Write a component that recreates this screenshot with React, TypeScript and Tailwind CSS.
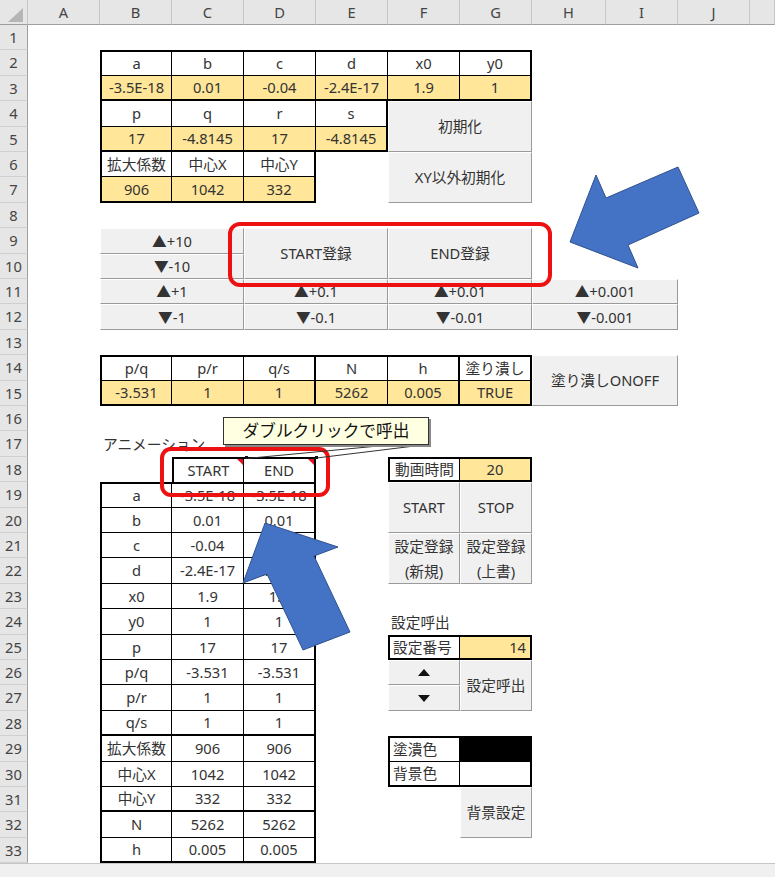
import React from "react";

const CS: Record<string, string> = {
  A: "col-start-2",
  B: "col-start-3",
  C: "col-start-4",
  D: "col-start-5",
  E: "col-start-6",
  F: "col-start-7",
  G: "col-start-8",
  H: "col-start-9",
  I: "col-start-10",
  J: "col-start-11",
  K: "col-start-12",
};
const RS: string[] = [
  "row-start-1", "row-start-2", "row-start-3", "row-start-4", "row-start-5", "row-start-6",
  "row-start-7", "row-start-8", "row-start-9", "row-start-10", "row-start-11", "row-start-12",
  "row-start-13", "row-start-14", "row-start-15", "row-start-16", "row-start-17", "row-start-18",
  "row-start-19", "row-start-20", "row-start-21", "row-start-22", "row-start-23", "row-start-24",
  "row-start-25", "row-start-26", "row-start-27", "row-start-28", "row-start-29", "row-start-30",
  "row-start-31", "row-start-32", "row-start-33", "row-start-34", "row-start-35",
];
const CSPAN: Record<number, string> = { 1: "", 2: "col-span-2", 4: "col-span-4" };
const RSPAN: Record<number, string> = { 1: "", 2: "row-span-2" };
const BT: Record<string, string> = {
  t1: "border-t",
  t2: "border-t-2",
  r1: "border-r",
  r2: "border-r-2",
  b1: "border-b",
  b2: "border-b-2",
  l1: "border-l",
  l2: "border-l-2",
};

function pos(at: string, cs = 1, rs = 1) {
  const col = at[0];
  const row = parseInt(at.slice(1), 10);
  return [CS[col], RS[row], CSPAN[cs], RSPAN[rs]].join(" ");
}

type CellProps = {
  at: string;
  cs?: number;
  rs?: number;
  b?: string;
  bg?: "y" | "w" | "k" | "";
  align?: "c" | "l" | "r";
  children?: React.ReactNode;
  extra?: React.ReactNode;
};

function Cell({ at, cs = 1, rs = 1, b = "", bg = "", align = "c", children, extra }: CellProps) {
  const bc = b
    .split(" ")
    .filter(Boolean)
    .map((t) => BT[t])
    .join(" ");
  const bgc = bg === "y" ? "bg-[#ffe699]" : bg === "w" ? "bg-white" : bg === "k" ? "bg-black" : "";
  const al = align === "l" ? "justify-start pl-[3px]" : align === "r" ? "justify-end pr-[4px]" : "justify-center";
  return (
    <div className={`${pos(at, cs, rs)} ${bc} border-black ${bgc} ${al} relative flex items-center whitespace-nowrap text-[#333]`}>
      {children}
      {extra}
    </div>
  );
}

function Btn({ at, cs = 1, rs = 1, children }: { at: string; cs?: number; rs?: number; children?: React.ReactNode }) {
  return (
    <div
      className={`${pos(at, cs, rs)} flex flex-col items-center justify-center whitespace-nowrap border border-t-white border-l-white border-r-[#9a9a9a] border-b-[#9a9a9a] bg-[#f0f0f0] text-[#333]`}
    >
      {children}
    </div>
  );
}

const COLS = ["A", "B", "C", "D", "E", "F", "G", "H", "I", "J", "K"];
const cols6 = ["B", "C", "D", "E", "F", "G"];
const t1h = ["a", "b", "c", "d", "x0", "y0"];
const t1v = ["-3.5E-18", "0.01", "-0.04", "-2.4E-17", "1.9", "1"];
const t2h = ["p", "q", "r", "s"];
const t2v = ["17", "-4.8145", "17", "-4.8145"];
const t3h = ["拡大係数", "中心X", "中心Y"];
const t3v = ["906", "1042", "332"];
const t4h = ["p/q", "p/r", "q/s", "N", "h", "塗り潰し"];
const t4v = ["-3.531", "1", "1", "5262", "0.005", "TRUE"];
const t4r = ["l2 r1", "r1", "r2", "r1", "r2", "r2"];
const anim: [string, string][] = [
  ["a", "-3.5E-18"],
  ["b", "0.01"],
  ["c", "-0.04"],
  ["d", "-2.4E-17"],
  ["x0", "1.9"],
  ["y0", "1"],
  ["p", "17"],
  ["p/q", "-3.531"],
  ["p/r", "1"],
  ["q/s", "1"],
  ["拡大係数", "906"],
  ["中心X", "1042"],
  ["中心Y", "332"],
  ["N", "5262"],
  ["h", "0.005"],
];

function vb(i: number, n: number) {
  if (i === 0) return "l2 r1";
  if (i === n - 1) return "r2";
  return "r1";
}

const RedCorner = () => (
  <svg className="absolute right-0 top-0" width="6" height="6" viewBox="0 0 6 6">
    <polygon points="0,0 6,0 6,6" fill="#e81123" />
  </svg>
);

export default function App() {
  const rows = Array.from({ length: 33 }, (_, i) => i + 1);
  return (
    <div className="relative h-[877px] w-[775px] overflow-hidden bg-white font-['Noto_Sans','Noto_Sans_CJK_JP',sans-serif] text-[14.7px]">
      <div className="grid h-full w-full grid-cols-[28px_72px_72px_72px_72px_72px_72px_72px_74px_72px_72px_1fr] grid-rows-[25px_25px_26px_25px_26px_25px_25px_26px_25px_26px_25px_25px_26px_25px_26px_25px_25px_26px_25px_26px_25px_25px_26px_25px_26px_25px_25px_26px_25px_26px_25px_25px_26px_25px_14px]">
        {/* corner */}
        <div className="col-start-1 row-start-1 relative border-b border-r border-b-[#9e9e9e] border-r-[#c6c6c6] bg-[#e6e6e6]">
          <svg className="absolute left-0 top-0" width="28" height="25" viewBox="0 0 28 25">
            <polygon points="8,22 23,8 23,22" fill="#b5b5b5" />
          </svg>
        </div>
        {/* column headers */}
        {COLS.map((c) => (
          <div
            key={c}
            className={`${CS[c]} row-start-1 flex items-center justify-center border-b border-r border-b-[#9e9e9e] border-r-[#c6c6c6] bg-[#e6e6e6] text-[#444]`}
          >
            {c === "K" ? "" : c}
          </div>
        ))}
        {/* row headers */}
        {rows.map((n) => (
          <div
            key={n}
            className={`col-start-1 ${RS[n]} flex items-center justify-center border-b border-r border-b-[#d0d0d0] border-r-[#9e9e9e] bg-[#e6e6e6] text-[#444]`}
          >
            {n}
          </div>
        ))}
        <div className="col-start-1 col-span-12 row-start-35 border-t border-[#c6c6c6] bg-[#f0f0f0]" />

        {/* table 1 */}
        {cols6.map((c, i) => (
          <Cell key={"h2" + c} at={c + "2"} bg="w" b={`t2 b1 ${vb(i, 6)}`}>
            {t1h[i]}
          </Cell>
        ))}
        {cols6.map((c, i) => (
          <Cell key={"v3" + c} at={c + "3"} bg="y" b={`b2 ${vb(i, 6)}`}>
            {t1v[i]}
          </Cell>
        ))}
        {/* p q r s */}
        {cols6.slice(0, 4).map((c, i) => (
          <Cell key={"h4" + c} at={c + "4"} bg="w" b={`b1 ${vb(i, 4)}`}>
            {t2h[i]}
          </Cell>
        ))}
        {cols6.slice(0, 4).map((c, i) => (
          <Cell key={"v5" + c} at={c + "5"} bg="y" b={`b2 ${vb(i, 4)}`}>
            {t2v[i]}
          </Cell>
        ))}
        {cols6.slice(0, 3).map((c, i) => (
          <Cell key={"h6" + c} at={c + "6"} bg="w" b={`b1 ${vb(i, 3)}`}>
            {t3h[i]}
          </Cell>
        ))}
        {cols6.slice(0, 3).map((c, i) => (
          <Cell key={"v7" + c} at={c + "7"} bg="y" b={`b2 ${vb(i, 3)}`}>
            {t3v[i]}
          </Cell>
        ))}
        <Btn at="F4" cs={2} rs={2}>初期化</Btn>
        <Btn at="F6" cs={2} rs={2}>XY以外初期化</Btn>

        {/* step buttons */}
        <Btn at="B9" cs={2}>▲+10</Btn>
        <Btn at="B10" cs={2}>▼-10</Btn>
        <Btn at="D9" cs={2} rs={2}>START登録</Btn>
        <Btn at="F9" cs={2} rs={2}>END登録</Btn>
        <Btn at="B11" cs={2}>▲+1</Btn>
        <Btn at="D11" cs={2}>▲+0.1</Btn>
        <Btn at="F11" cs={2}>▲+0.01</Btn>
        <Btn at="H11" cs={2}>▲+0.001</Btn>
        <Btn at="B12" cs={2}>▼-1</Btn>
        <Btn at="D12" cs={2}>▼-0.1</Btn>
        <Btn at="F12" cs={2}>▼-0.01</Btn>
        <Btn at="H12" cs={2}>▼-0.001</Btn>

        {/* table 4 */}
        {cols6.map((c, i) => (
          <Cell key={"h14" + c} at={c + "14"} bg="w" b={`t2 b1 ${t4r[i]}`}>
            {t4h[i]}
          </Cell>
        ))}
        {cols6.map((c, i) => (
          <Cell key={"v15" + c} at={c + "15"} bg="y" b={`b2 ${t4r[i]}`}>
            {t4v[i]}
          </Cell>
        ))}
        <Btn at="H14" cs={2} rs={2}>塗り潰しONOFF</Btn>

        {/* animation */}
        <Cell at="B17" align="l" cs={2}>
          アニメーション
        </Cell>
        <Cell at="C18" b="t2 l2 r1" bg="w" extra={<RedCorner />}>
          START
        </Cell>
        <Cell at="D18" b="t2 r2" bg="w" extra={<RedCorner />}>
          END
        </Cell>
        {anim.map(([label, val], i) => {
          const r = 19 + i;
          const bot = r === 33 || r === 28 || r === 31 ? "b2" : "b1";
          const top = r === 19 ? "t2" : "";
          return (
            <React.Fragment key={"a" + r}>
              <Cell at={"B" + r} bg="w" b={`${top} ${bot} l2 r1`}>
                {label}
              </Cell>
              <Cell at={"C" + r} bg="w" b={`${top} ${bot} r1`}>
                {val}
              </Cell>
              <Cell at={"D" + r} bg="w" b={`${top} ${bot} r2`}>
                {val}
              </Cell>
            </React.Fragment>
          );
        })}

        {/* right panel */}
        <Cell at="F18" b="t2 l2 b2 r1" bg="w">
          動画時間
        </Cell>
        <Cell at="G18" b="t2 r2 b2" bg="y">
          20
        </Cell>
        <Btn at="F19" rs={2}>START</Btn>
        <Btn at="G19" rs={2}>STOP</Btn>
        <Btn at="F21" rs={2}>
          <span className="leading-[25px]">設定登録</span>
          <span className="leading-[25px]">(新規)</span>
        </Btn>
        <Btn at="G21" rs={2}>
          <span className="leading-[25px]">設定登録</span>
          <span className="leading-[25px]">(上書)</span>
        </Btn>

        <Cell at="F24" align="l" cs={2}>
          設定呼出
        </Cell>
        <Cell at="F25" b="t2 l2 b2 r1" bg="w" align="l">
          設定番号
        </Cell>
        <Cell at="G25" b="t2 r2 b2" bg="y" align="r">
          14
        </Cell>
        <Btn at="F26">
          <svg width="12" height="7" viewBox="0 0 12 7">
            <polygon points="6,0 12,7 0,7" fill="#111" />
          </svg>
        </Btn>
        <Btn at="F27">
          <svg width="12" height="7" viewBox="0 0 12 7">
            <polygon points="0,0 12,0 6,7" fill="#111" />
          </svg>
        </Btn>
        <Btn at="G26" rs={2}>設定呼出</Btn>

        <Cell at="F29" b="t2 l2 r1 b1" bg="w" align="l">
          塗潰色
        </Cell>
        <Cell at="G29" b="t2 r2 b1" bg="k" />
        <Cell at="F30" b="l2 r1 b2" bg="w" align="l">
          背景色
        </Cell>
        <Cell at="G30" b="r2 b2" bg="w" />
        <Btn at="G31" rs={2}>背景設定</Btn>
      </div>

      {/* overlays */}
      <svg className="pointer-events-none absolute left-0 top-0" width="775" height="877" viewBox="0 0 775 877">
        <rect x="230" y="224" width="320" height="61" rx="10" ry="10" fill="none" stroke="#ee1111" strokeWidth="4" />
        <rect x="162" y="449" width="166" height="46" rx="9" ry="9" fill="none" stroke="#ee1111" strokeWidth="4" />
        <polygon
          points="570,242 596,175 606,198 678,167 699,213 628,245 638,268"
          fill="#4472c4"
          stroke="#2f528f"
          strokeWidth="1"
        />
        <polygon
          points="265,523 338,547 314,556 350,632 303,650 267,574 243,583"
          fill="#4472c4"
          stroke="#2f528f"
          strokeWidth="1"
        />
        <line x1="246.5" y1="458.5" x2="431" y2="441" stroke="#333" strokeWidth="1" />
        <line x1="316.5" y1="458" x2="431" y2="444" stroke="#333" strokeWidth="1" />
        <rect x="245" y="456" width="3" height="3" fill="#111" />
        <rect x="315" y="456" width="3" height="3" fill="#111" />
      </svg>
      <div className="absolute left-[223px] top-[417px] flex h-[28px] w-[206px] items-center justify-center border border-[#333] bg-[#ffffe1] text-[16.7px] text-[#111] shadow-[2px_2px_0_#8a8a8a]">
        ダブルクリックで呼出
      </div>
    </div>
  );
}
